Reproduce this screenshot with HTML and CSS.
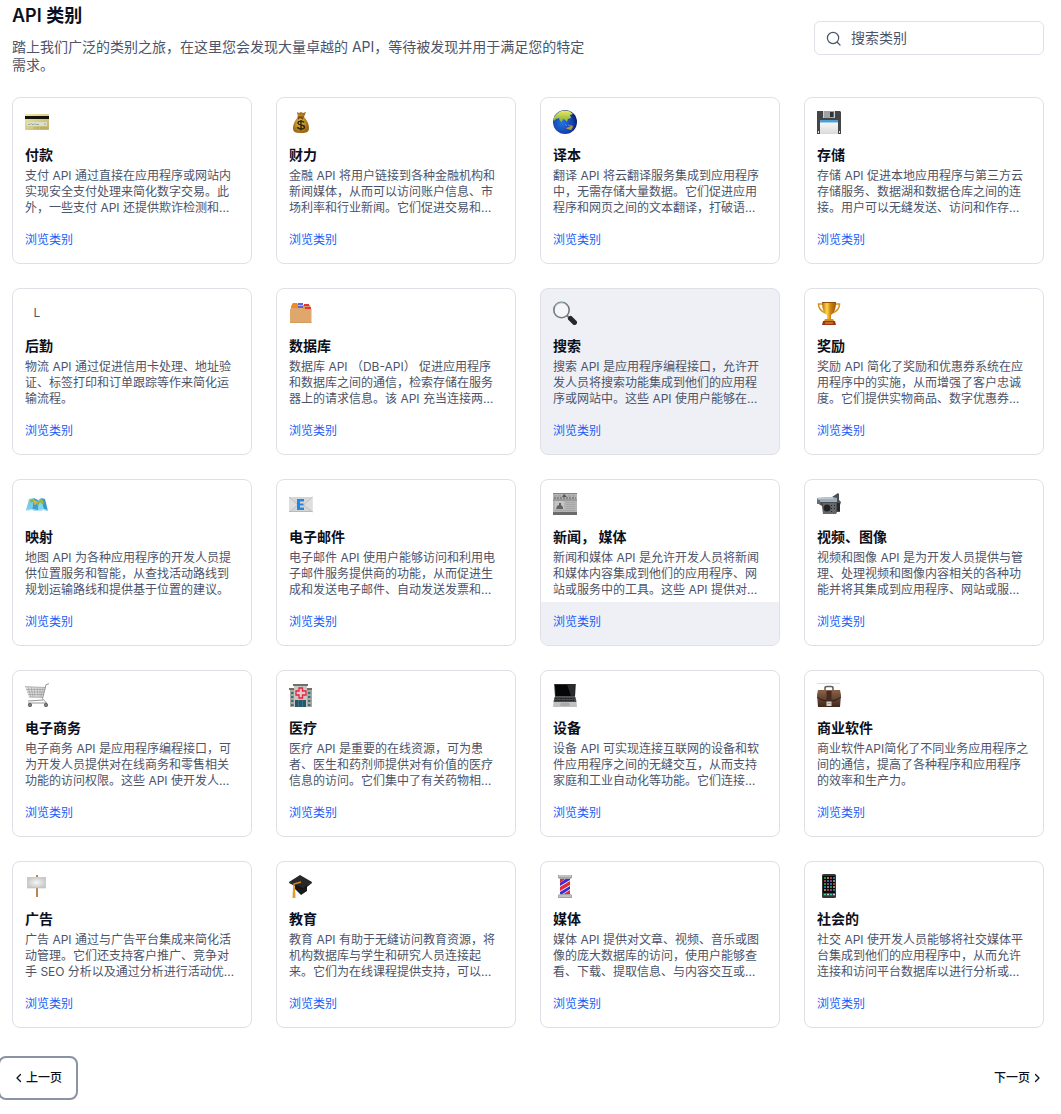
FILE: index.html
```html
<!DOCTYPE html>
<html lang="zh-CN">
<head>
<meta charset="utf-8">
<meta name="viewport" content="width=device-width, initial-scale=1">
<title>API 类别</title>
<link rel="stylesheet" href="styles.css">
</head>
<body>
<main class="page">
  <header class="header">
    <div class="intro">
      <h1 class="title">API 类别</h1>
      <p class="lead">踏上我们广泛的类别之旅，在这里您会发现大量卓越的 API，等待被发现并用于满足您的特定需求。</p>
    </div>
    <label class="search">
      <svg class="search-icon" viewBox="0 0 16 16" aria-hidden="true"><circle cx="7.5" cy="7.5" r="6"/><path d="M12 12l3 3"/></svg>
      <input class="search-input" type="search" placeholder="搜索类别" aria-label="搜索类别">
    </label>
  </header>

  <section class="grid">
    <article class="card">
      <div class="card-body">
        <svg class="icon" viewBox="0 0 24 24" aria-hidden="true">
          <defs><linearGradient id="card" x2="1" y2="1"><stop stop-color="#f0e9a6"/><stop offset="1" stop-color="#c0b164"/></linearGradient></defs>
          <rect y="4" width="24" height="16" rx="1" fill="url(#card)"/><path d="M0 6h24v3H0z" fill="#15130d"/>
          <path d="M2 12h20v4H2z" fill="#dedfc8"/><path d="M3 14.500h2l1-1 1 1h2l1-1 1 1h3M19 14h2" fill="none" stroke="#7c98b5" stroke-width=".8"/><path d="M9 18h13" stroke="#9e8e4b" stroke-width=".8" stroke-dasharray="2 1"/>
        </svg>
        <h2 class="card-title">付款</h2>
        <p class="card-text">支付 API 通过直接在应用程序或网站内实现安全支付处理来简化数字交易。此外，一些支付 API 还提供欺诈检测和…</p>
      </div>
      <div class="card-foot"><a class="card-link" href="#">浏览类别</a></div>
    </article>

    <article class="card">
      <div class="card-body">
        <svg class="icon" viewBox="0 0 24 24" aria-hidden="true">
          <defs><radialGradient id="bag" cx=".45" cy=".5"><stop stop-color="#edc447"/><stop offset="1" stop-color="#9e6815"/></radialGradient></defs>
          <path d="M8 2l2 1 2-1 2 1 3-1-2 5c3 3 5 7 5 11 0 4-2 5-8 5s-8-1-8-5c0-4 2-8 5-11z" fill="url(#bag)"/>
          <path d="M8.500 7h6.500M9 9l2-2 3 2" stroke="#6b430f" stroke-width="1.200" fill="none"/>
          <path d="M15 12.500c-.5-1.500-6-2-6 .5 0 2.500 6.500 1.500 6.500 4 0 2.500-6.500 2.500-7 0M12 10v10.500" fill="none" stroke="#31280d" stroke-width="1.400"/>
        </svg>
        <h2 class="card-title">财力</h2>
        <p class="card-text">金融 API 将用户链接到各种金融机构和新闻媒体，从而可以访问账户信息、市场利率和行业新闻。它们促进交易和…</p>
      </div>
      <div class="card-foot"><a class="card-link" href="#">浏览类别</a></div>
    </article>

    <article class="card">
      <div class="card-body">
        <svg class="icon" viewBox="0 0 24 24" aria-hidden="true">
          <defs>
            <radialGradient id="sea" cx=".38" cy=".55" r=".65"><stop stop-color="#2671e0"/><stop offset=".7" stop-color="#123fae"/><stop offset="1" stop-color="#061560"/></radialGradient>
            <linearGradient id="land" x2="0" y2="1"><stop stop-color="#eeea60"/><stop offset="1" stop-color="#7fae3c"/></linearGradient>
          </defs>
          <circle cx="12" cy="12" r="12" fill="url(#sea)"/>
          <path d="M2 6C5 1 11-1 17 1.500l3 2.500-3 1 1 3-3 1-1 3-2-2-2-1-1 3-2-1-1-3-3 1-2 2-1-2z" fill="url(#land)"/>
          <path d="M12 14l2 2M15 15l3 1" stroke="#6f9455"/><path d="M13 18l3-1 3-2 1 2-2 3-4-1z" fill="#b5953b"/>
        </svg>
        <h2 class="card-title">译本</h2>
        <p class="card-text">翻译 API 将云翻译服务集成到应用程序中，无需存储大量数据。它们促进应用程序和网页之间的文本翻译，打破语…</p>
      </div>
      <div class="card-foot"><a class="card-link" href="#">浏览类别</a></div>
    </article>

    <article class="card">
      <div class="card-body">
        <svg class="icon" viewBox="0 0 24 24" aria-hidden="true">
          <defs><linearGradient id="lbl" x2="0" y2="1"><stop stop-color="#fff"/><stop offset="1" stop-color="#d9d9da"/></linearGradient></defs>
          <path d="M0 1h23l1 1v22H0z" fill="#444547"/><path d="M6 1h12v7H6z" fill="#9fa3a6"/><path d="M13 2h3.500v5H13z" fill="#303234"/><path d="M6 1h1v7H6zM17 1h1v7h-1z" fill="#cbced0"/>
          <path d="M3 10h18v14H3z" fill="url(#lbl)"/><path d="M3 10h18v2.500H3z" fill="#4e9fd4"/><path d="M1 21h1v2H1zM22 21h1v2h-1z" fill="#ddd"/>
        </svg>
        <h2 class="card-title">存储</h2>
        <p class="card-text">存储 API 促进本地应用程序与第三方云存储服务、数据湖和数据仓库之间的连接。用户可以无缝发送、访问和作存…</p>
      </div>
      <div class="card-foot"><a class="card-link" href="#">浏览类别</a></div>
    </article>

    <article class="card">
      <div class="card-body">
        <span class="icon icon-letter">L</span>
        <h2 class="card-title">后勤</h2>
        <p class="card-text">物流 API 通过促进信用卡处理、地址验证、标签打印和订单跟踪等作来简化运输流程。</p>
      </div>
      <div class="card-foot"><a class="card-link" href="#">浏览类别</a></div>
    </article>

    <article class="card">
      <div class="card-body">
        <svg class="icon" viewBox="0 0 24 24" aria-hidden="true">
          <path d="M2 5l2-3h4l1 2h12l1 4-10 2L2 8z" fill="#d29858"/><path d="M3 4l1-2h4l1 2v3H3z" fill="#f08a24"/><path d="M9 2h5v5H9z" fill="#6266d5"/><path d="M9 4.500h5" stroke="#dcc8dc" stroke-width=".8"/>
          <path d="M15 3h5v2h-5zM16 6h6v2.500h-6z" fill="#e8333d"/>
          <path d="M1 8l2-1h11l2 1h6.500v13.500H1z" fill="#dfa76b"/><path d="M1 21.500h21.500" stroke="#d39b5e"/>
        </svg>
        <h2 class="card-title">数据库</h2>
        <p class="card-text">数据库 API （DB-API） 促进应用程序和数据库之间的通信，检索存储在服务器上的请求信息。该 API 充当连接两…</p>
      </div>
      <div class="card-foot"><a class="card-link" href="#">浏览类别</a></div>
    </article>

    <article class="card card-active">
      <div class="card-body">
        <svg class="icon" viewBox="0 0 24 24" aria-hidden="true">
          <circle cx="8.500" cy="9" r="7.700" fill="#f4f6f7" stroke="#737b80" stroke-width="1.600"/><path d="M2 6c2-5 9-6 12-1" fill="none" stroke="#abc3d1"/>
          <path d="M14 14.500l3 3" stroke="#777" stroke-width="2"/><path d="M17.500 17.500l4 4" stroke="#26292b" stroke-width="5" stroke-linecap="round"/>
        </svg>
        <h2 class="card-title">搜索</h2>
        <p class="card-text">搜索 API 是应用程序编程接口，允许开发人员将搜索功能集成到他们的应用程序或网站中。这些 API 使用户能够在…</p>
      </div>
      <div class="card-foot"><a class="card-link" href="#">浏览类别</a></div>
    </article>

    <article class="card">
      <div class="card-body">
        <svg class="icon" viewBox="0 0 24 24" aria-hidden="true">
          <defs><linearGradient id="cup"><stop stop-color="#b86a08"/><stop offset=".35" stop-color="#ffd74d"/><stop offset=".6" stop-color="#d28710"/><stop offset="1" stop-color="#9c5206"/></linearGradient></defs>
          <path d="M6 3H1.500c0 4 2 7 7 9M18 3h4.500c0 4-2 7-7 9" fill="none" stroke="#d59420" stroke-width="1.600"/>
          <path d="M5 1h14c0 7-2 11-5 13v5h-4v-5C7 12 5 8 5 1z" fill="url(#cup)"/><path d="M5 1h14v1H5z" fill="#8f5009"/>
          <path d="M8 18h8l1 2H7z" fill="#d38c1e"/><path d="M6 20h12l1 4H5z" fill="#9c3515"/><path d="M8 22h8" stroke="#e1a342"/>
        </svg>
        <h2 class="card-title">奖励</h2>
        <p class="card-text">奖励 API 简化了奖励和优惠券系统在应用程序中的实施，从而增强了客户忠诚度。它们提供实物商品、数字优惠券…</p>
      </div>
      <div class="card-foot"><a class="card-link" href="#">浏览类别</a></div>
    </article>

    <article class="card">
      <div class="card-body">
        <svg class="icon" viewBox="0 0 24 24" aria-hidden="true">
          <path d="M4 7l5-1-2 12-6 .5z" fill="#74cdea"/><path d="M9 6l4 2v11l-6-1z" fill="#3e9fca"/><path d="M13 8l3-2 3 12-6 1z" fill="#82d4ef"/><path d="M16 6l4 1 3 12-4-1z" fill="#379ac4"/>
          <path d="M5 8l3-1 2 2 4 0 1-2 3 1 1 4-2 0-2-2-2 4-2-3-2-2-3 2z" fill="#8fb43d"/><path d="M9 8l3 2-2 3zM16 8l2 3" stroke="#dfb43c" stroke-width=".7" fill="#dfb43c"/><path d="M2 18l5-.5 6 1 6-1 4 1" stroke="#bce7f3" fill="none"/>
        </svg>
        <h2 class="card-title">映射</h2>
        <p class="card-text">地图 API 为各种应用程序的开发人员提供位置服务和智能，从查找活动路线到规划运输路线和提供基于位置的建议。</p>
      </div>
      <div class="card-foot"><a class="card-link" href="#">浏览类别</a></div>
    </article>

    <article class="card">
      <div class="card-body">
        <svg class="icon" viewBox="0 0 24 24" aria-hidden="true">
          <path d="M0 5h23.500v15H0z" fill="#d6d6d7"/><path d="M0 5l9 8-9 7M23.500 5l-9 8 9 7" fill="#dedede" stroke="#b3b4b6" stroke-width=".7"/><path d="M0 19.500h23.500" stroke="#b9babb"/>
          <path d="M8 7h7v2.500h-4v2h3.500v2H11v2h4V18H8z" fill="#2786dc"/>
        </svg>
        <h2 class="card-title">电子邮件</h2>
        <p class="card-text">电子邮件 API 使用户能够访问和利用电子邮件服务提供商的功能，从而促进生成和发送电子邮件、自动发送发票和…</p>
      </div>
      <div class="card-foot"><a class="card-link" href="#">浏览类别</a></div>
    </article>

    <article class="card card-foot-active">
      <div class="card-body">
        <svg class="icon" viewBox="0 0 24 24" aria-hidden="true">
          <path d="M0 1h24v22H0z" fill="#b4b4b4"/><path d="M0 1.500h24" stroke="#858585"/><path d="M1 4h8M15 4h8" stroke="#999" stroke-dasharray="3 1"/><path d="M0 8h24" stroke="#808080"/><path d="M1 6h22" stroke="#777" stroke-width="1.500" stroke-dasharray="2 1"/><path d="M9 5l2-3 3 3z" fill="#555"/>
          <path d="M2 9h9v8H2z" fill="#c4c4c4"/><path d="M3 17l1-3 2-1v-2h2v2l2 2v2z" fill="#626262"/><path d="M13 10.500h9M13 12.500h9M13 14.500h9M13 16.500h9M2 18.500h20" stroke="#a2a2a2" stroke-width=".7"/><path d="M0 20h24v3H0z" fill="#6b6b6b"/>
        </svg>
        <h2 class="card-title">新闻， 媒体</h2>
        <p class="card-text">新闻和媒体 API 是允许开发人员将新闻和媒体内容集成到他们的应用程序、网站或服务中的工具。这些 API 提供对…</p>
      </div>
      <div class="card-foot"><a class="card-link" href="#">浏览类别</a></div>
    </article>

    <article class="card">
      <div class="card-body">
        <svg class="icon" viewBox="0 0 24 24" aria-hidden="true">
          <path d="M0 6l15-1 6-4 1 1v6l2 2-1 3v7h-3l-1 2H6l-1-8-5-3z" fill="#4c4f52"/><path d="M0 6l16-1 4 1v4H1z" fill="#9daebb"/><path d="M1 6h15" stroke="#d7e3eb"/><path d="M6 11h13v11H6z" fill="#64686c"/>
          <circle cx="10" cy="16" r="3.500" fill="#222"/><path d="M14 13h1v1h-1zM17 13h1v1h-1zM14 16h1v1h-1zM17 16h1v1h-1zM14 19h1v1h-1z" fill="#242628"/><path d="M20 11h3v8h-3z" fill="#26282a"/><path d="M0 8h3v4H0z" fill="#6b6e70"/>
        </svg>
        <h2 class="card-title">视频、图像</h2>
        <p class="card-text">视频和图像 API 是为开发人员提供与管理、处理视频和图像内容相关的各种功能并将其集成到应用程序、网站或服…</p>
      </div>
      <div class="card-foot"><a class="card-link" href="#">浏览类别</a></div>
    </article>

    <article class="card">
      <div class="card-body">
        <svg class="icon" viewBox="0 0 24 24" aria-hidden="true">
          <path d="M0 3.500l21 1-3 10H4z" fill="#dedede"/><path d="M3 4l3 10M6 4l2 10M9 4l1 10M12 4l1 10M15 4v10M18 4l-2 10M0 3.500l21 1M1 6.500h19M2 9h17M3 11.500h16M4 14l14 .5" fill="none" stroke="#969696" stroke-width=".6"/>
          <path d="M24 .7l-3 1-3.500 14 4 4.300H3M3 18l15-1" fill="none" stroke="#8a8a8a" stroke-width=".9"/><circle cx="5" cy="22" r="2" fill="#535353"/><circle cx="21" cy="22" r="2" fill="#535353"/><circle cx="5" cy="22" r=".7" fill="#ccc"/><circle cx="21" cy="22" r=".7" fill="#ccc"/>
        </svg>
        <h2 class="card-title">电子商务</h2>
        <p class="card-text">电子商务 API 是应用程序编程接口，可为开发人员提供对在线商务和零售相关功能的访问权限。这些 API 使开发人…</p>
      </div>
      <div class="card-foot"><a class="card-link" href="#">浏览类别</a></div>
    </article>

    <article class="card">
      <div class="card-body">
        <svg class="icon" viewBox="0 0 24 24" aria-hidden="true">
          <path d="M1 6h22v18H1z" fill="#aaa79f"/><path d="M5 1h13v23H5z" fill="#c9c6c0"/><path d="M4 1h15v2H4zM0 5h5v2H0zM18 5h5v2h-5z" fill="#706f6c"/>
          <path d="M2 9h2.500v2H2zM2 13h2.500v2H2zM2 17h2.500v2H2zM2 21h2.500v2H2zM19 9h2.500v2H19zM19 13h2.500v2H19zM19 17h2.500v2H19zM19 21h2.500v2H19z" fill="#397083"/><path d="M10 5h3.500v3H17v4h-3.500v3H10v-3H7V8h3z" fill="#e8c9cb" stroke="#e52340" stroke-width="1.300"/>
          <path d="M6 17h11v7H6z" fill="#25586a"/><path d="M9.500 17v7M13.500 17v7" stroke="#4a7e90" stroke-width=".7"/>
        </svg>
        <h2 class="card-title">医疗</h2>
        <p class="card-text">医疗 API 是重要的在线资源，可为患者、医生和药剂师提供对有价值的医疗信息的访问。它们集中了有关药物相…</p>
      </div>
      <div class="card-foot"><a class="card-link" href="#">浏览类别</a></div>
    </article>

    <article class="card">
      <div class="card-body">
        <svg class="icon" viewBox="0 0 24 24" aria-hidden="true">
          <path d="M1 1h22l-1 13H2z" fill="#505253"/><path d="M2 1.500h20L21.500 13h-19z" fill="#050606"/><path d="M14 1.500h8L21.500 13H18z" fill="#292b2c"/><path d="M1.500 14h21l1 5H.5z" fill="#4b4c4d"/>
          <path d="M2 15.500h20M2 17.500h20" stroke="#242526" stroke-dasharray="2 .5"/><path d="M.5 19h23l.5 5H0z" fill="#bfc1c2"/><path d="M8 19.500h8l1 3.500H7z" fill="#a8aaab"/>
        </svg>
        <h2 class="card-title">设备</h2>
        <p class="card-text">设备 API 可实现连接互联网的设备和软件应用程序之间的无缝交互，从而支持家庭和工业自动化等功能。它们连接…</p>
      </div>
      <div class="card-foot"><a class="card-link" href="#">浏览类别</a></div>
    </article>

    <article class="card">
      <div class="card-body">
        <svg class="icon" viewBox="0 0 24 24" aria-hidden="true">
          <defs><linearGradient id="lea" x2="0" y2="1"><stop stop-color="#8b6247"/><stop offset="1" stop-color="#3f271c"/></linearGradient></defs>
          <path d="M0 .5h23" stroke="#ddd"/><path d="M8 8V5q0-1.500 2-1.500h4q2 0 2 1.500v3" fill="none" stroke="#606264" stroke-width="1.600"/><path d="M1 7h22l1 5-1 12H1L0 12z" fill="url(#lea)"/>
          <path d="M0 14c4 3 7 4 12 4s8-1 12-4" fill="none" stroke="#2f1d16"/><path d="M9.500 8h5v9h-5z" fill="#482b20"/><path d="M9.500 18.500h5V23h-5z" fill="#d6d0c8"/><path d="M10.500 20.500h3" stroke="#a59b91"/>
        </svg>
        <h2 class="card-title">商业软件</h2>
        <p class="card-text">商业软件API简化了不同业务应用程序之间的通信，提高了各种程序和应用程序的效率和生产力。</p>
      </div>
      <div class="card-foot"><a class="card-link" href="#">浏览类别</a></div>
    </article>

    <article class="card">
      <div class="card-body">
        <svg class="icon" viewBox="0 0 24 24" aria-hidden="true">
          <defs><radialGradient id="sign"><stop stop-color="#f5f5f5"/><stop offset="1" stop-color="#c9cacb"/></radialGradient></defs>
          <path d="M11 1h2v22h-2z" fill="#b98552"/><path d="M2 3h19v11H2z" fill="url(#sign)"/><path d="M2 14h19" stroke="#b8b9ba" stroke-width=".6"/>
        </svg>
        <h2 class="card-title">广告</h2>
        <p class="card-text">广告 API 通过与广告平台集成来简化活动管理。它们还支持客户推广、竞争对手 SEO 分析以及通过分析进行活动优…</p>
      </div>
      <div class="card-foot"><a class="card-link" href="#">浏览类别</a></div>
    </article>

    <article class="card">
      <div class="card-body">
        <svg class="icon" viewBox="0 0 24 24" aria-hidden="true">
          <path d="M6 10l12 2v5l-6 4-6-6z" fill="#191a1b"/><path d="M0 8l11-7 12 7-9 7z" fill="#26282a"/><path d="M0 8l14 6 9-6v1l-9 7-14-7z" fill="#141516"/>
          <path d="M12 8l-7 2v6" fill="none" stroke="#d9861d" stroke-width="1.500"/><path d="M4 14h2l.5 10h-3z" fill="#e99932"/>
        </svg>
        <h2 class="card-title">教育</h2>
        <p class="card-text">教育 API 有助于无缝访问教育资源，将机构数据库与学生和研究人员连接起来。它们为在线课程提供支持，可以…</p>
      </div>
      <div class="card-foot"><a class="card-link" href="#">浏览类别</a></div>
    </article>

    <article class="card">
      <div class="card-body">
        <svg class="icon" viewBox="0 0 24 24" aria-hidden="true">
          <path d="M7 4h10v17H7z" fill="#f5f3f7"/><path d="M7 5h5l-5 4zM17 7v4L7 17v-4zM17 16v4l-2 1H9z" fill="#ea2632"/><path d="M14 4h3v2L7 12V9zM17 12v3L8 21H7v-3z" fill="#3130dd"/>
          <path d="M5 1h14v3l-2 1H7L5 4zM7 20h10l2 1v3H5v-3z" fill="#a2a4a5"/><path d="M6 2h12M6 22h12" stroke="#dededf"/>
        </svg>
        <h2 class="card-title">媒体</h2>
        <p class="card-text">媒体 API 提供对文章、视频、音乐或图像的庞大数据库的访问，使用户能够查看、下载、提取信息、与内容交互或…</p>
      </div>
      <div class="card-foot"><a class="card-link" href="#">浏览类别</a></div>
    </article>

    <article class="card">
      <div class="card-body">
        <svg class="icon" viewBox="0 0 24 24" aria-hidden="true">
          <rect x="5" width="14" height="24" rx="1.500" fill="#343638"/><path d="M6 2h12v20H6z" fill="#08090a"/>
          <path d="M7 4h2M7 10h2M13 13h2" stroke="#35b86a" stroke-width="1.500"/><path d="M10 4h2M16 13h2M7 16h2" stroke="#d9b741" stroke-width="1.500"/><path d="M13 4h2M7 7h2M16 10h2M10 16h2" stroke="#d84c66" stroke-width="1.500"/><path d="M16 4h2M10 7h2M13 10h2M7 13h2M16 16h2" stroke="#3d8ed9" stroke-width="1.500"/><path d="M13 7h2M10 10h2M13 16h2" stroke="#a855a5" stroke-width="1.500"/><path d="M16 7h2M10 13h2" stroke="#a7b0a8" stroke-width="1.500"/>
          <path d="M6 20.500h12" stroke="#394449" stroke-width="3"/><path d="M7 20.500h2M13 20.500h2" stroke="#46c785" stroke-width="1.500"/><path d="M10 20.500h2M16 20.500h2" stroke="#a5d7e5" stroke-width="1.500"/>
        </svg>
        <h2 class="card-title">社会的</h2>
        <p class="card-text">社交 API 使开发人员能够将社交媒体平台集成到他们的应用程序中，从而允许连接和访问平台数据库以进行分析或…</p>
      </div>
      <div class="card-foot"><a class="card-link" href="#">浏览类别</a></div>
    </article>
  </section>

  <nav class="pager" aria-label="分页">
    <button class="pager-button pager-focus" type="button"><svg class="chevron" viewBox="0 0 12 12" aria-hidden="true"><path d="M6.500 2.500L3 6l3.500 3.500"/></svg>上一页</button>
    <button class="pager-button" type="button">下一页<svg class="chevron" viewBox="0 0 12 12" aria-hidden="true"><path d="M5.500 2.500L9 6 5.500 9.500"/></svg></button>
  </nav>
</main>
</body>
</html>
```
FILE: styles.css
```css
*,
*::before,
*::after {
  box-sizing: border-box;
}

body {
  margin: 0;
  background: #fff;
  color: #0b1020;
  font-family: Inter, "Noto Sans CJK SC", sans-serif;
  font-size: 12px;
  line-height: 16px;
  text-spacing-trim: space-all;
}

h1,
h2,
p {
  margin: 0;
}

.page {
  padding: 2px 17px 14px 12px;
  overflow-x: hidden;
}

.header {
  display: flex;
  align-items: center;
  justify-content: space-between;
  gap: 24px;
  margin-bottom: 23px;
}

.intro {
  max-width: 580px;
}

.title {
  margin-bottom: 8px;
  font-size: 18px;
  font-weight: 600;
  line-height: 28px;
}

.lead {
  color: #4c546a;
  font-size: 14px;
  line-height: 18px;
}

.search {
  display: flex;
  align-items: center;
  flex: none;
  gap: 10px;
  width: 230px;
  height: 34px;
  padding: 0 11px;
  border: 1px solid #dfe1e8;
  border-radius: 6px;
}

.search-icon {
  flex: none;
  width: 15px;
  height: 15px;
  fill: none;
  stroke: #4c546a;
  stroke-width: 1.3;
  stroke-linecap: round;
}

.search-input {
  flex: 1;
  width: 100%;
  min-width: 0;
  padding: 0;
  border: 0;
  outline: 0;
  background: none;
  color: #4c546a;
  font: inherit;
  font-size: 14px;
  line-height: 20px;
}

.search-input::placeholder {
  color: #4c546a;
  opacity: 1;
}

.grid {
  display: grid;
  grid-template-columns: repeat(4, minmax(0, 1fr));
  gap: 24px;
}

.card {
  display: flex;
  flex-direction: column;
  border: 1px solid #dfe0e6;
  border-radius: 8px;
  overflow: hidden;
}

.card-active,
.card-foot-active .card-foot {
  background: #eff0f5;
}

.card-body {
  flex: 1;
  padding: 12px 12px 4px;
}

.icon {
  display: block;
  width: 24px;
  height: 24px;
}

.icon-letter {
  color: #4c546a;
  line-height: 24px;
  text-align: center;
}

.card-title {
  margin: 12px 0 4px;
  font-size: 14px;
  font-weight: 600;
  line-height: 18px;
}

.card-text {
  color: #4c546a;
}

.card-foot {
  padding: 12px 12px 15px;
}

.card-link {
  display: block;
  color: #1a5cf5;
  text-decoration: none;
}

.pager {
  display: flex;
  justify-content: space-between;
  margin: 32px -10px 0;
}

.pager-button {
  display: flex;
  align-items: center;
  height: 36px;
  padding: 0 12px;
  border: 0;
  border-radius: 4px;
  background: none;
  color: #0b1020;
  font: inherit;
  font-weight: 500;
}

.pager-focus {
  outline: 2px solid #8993a4;
  outline-offset: 2px;
}

.chevron {
  width: 12px;
  height: 12px;
  fill: none;
  stroke: currentColor;
  stroke-width: 1.3;
  stroke-linecap: round;
  stroke-linejoin: round;
}
```
